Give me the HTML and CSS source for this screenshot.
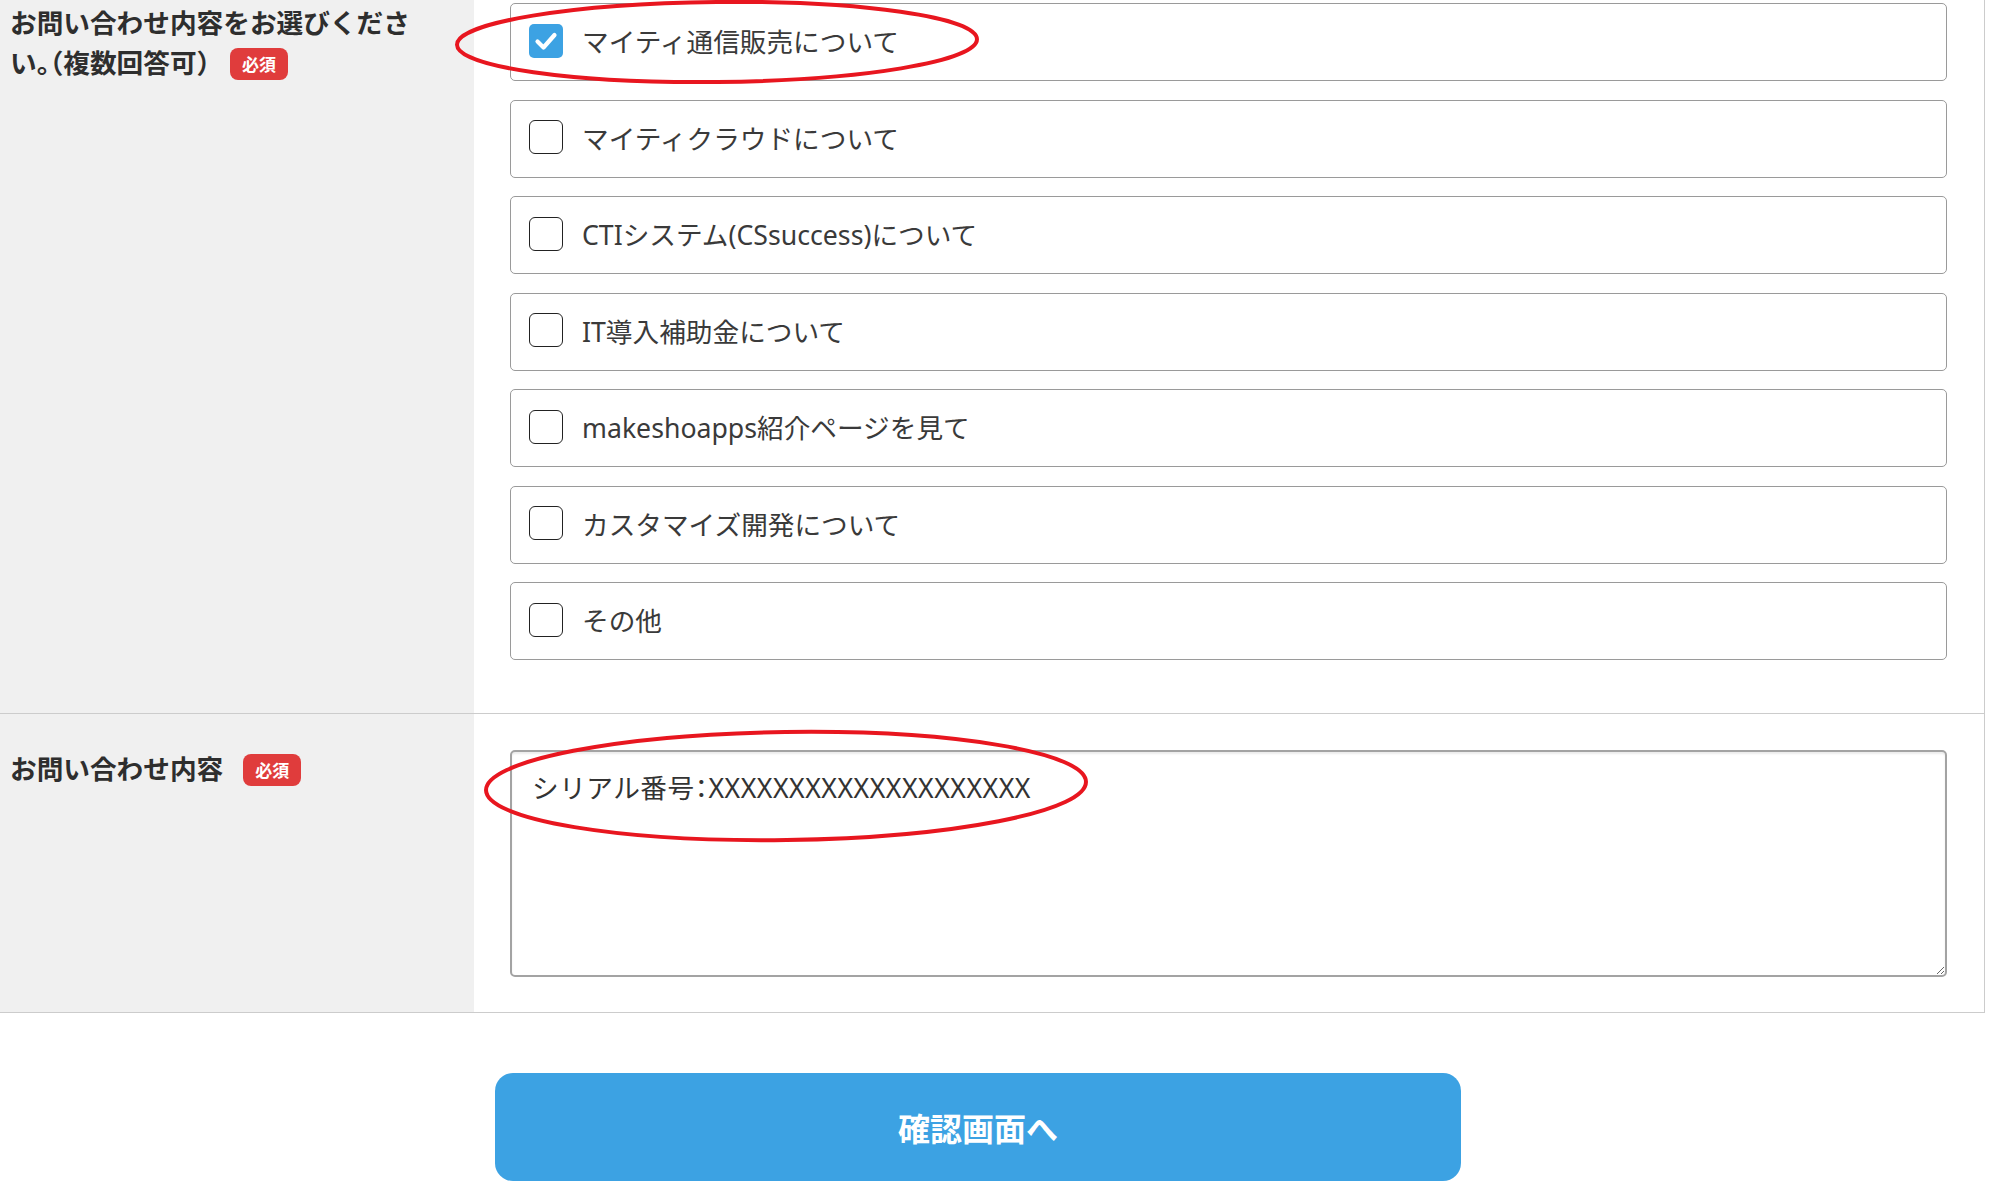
FILE: index.html
```html
<!DOCTYPE html>
<html lang="ja">
<head>
<meta charset="utf-8">
<title>お問い合わせ</title>
<link rel="stylesheet" href="styles.css">
</head>
<body>
<div class="page">
  <div class="form">
    <div class="row row-first">
      <div class="label">お問い合わせ内容をお選びください。（複数回答可）<span class="badge">必須</span></div>
      <div class="field">
        <ul class="options">
          <li class="option"><span class="cb checked"><svg viewBox="0 0 34 34" width="34" height="34"><polyline points="8.5,17.5 14.5,23.5 25.5,11" fill="none" stroke="#fff" stroke-width="4.2" stroke-linecap="round" stroke-linejoin="round"/></svg></span><span class="opt-text">マイティ通信販売について</span></li>
          <li class="option"><span class="cb"></span><span class="opt-text">マイティクラウドについて</span></li>
          <li class="option"><span class="cb"></span><span class="opt-text">CTIシステム(CSsuccess)について</span></li>
          <li class="option"><span class="cb"></span><span class="opt-text">IT導入補助金について</span></li>
          <li class="option"><span class="cb"></span><span class="opt-text">makeshoapps紹介ページを見て</span></li>
          <li class="option"><span class="cb"></span><span class="opt-text">カスタマイズ開発について</span></li>
          <li class="option"><span class="cb"></span><span class="opt-text">その他</span></li>
        </ul>
      </div>
    </div>
    <div class="row row-second">
      <div class="label">お問い合わせ内容<span class="badge">必須</span></div>
      <div class="field">
        <textarea class="textarea">シリアル番号：XXXXXXXXXXXXXXXXXXXX</textarea>
      </div>
    </div>
  </div>
  <div class="actions">
    <button class="submit" type="button">確認画面へ</button>
  </div>
  <svg class="annot" viewBox="0 0 1994 1192" width="1994" height="1192">
    <ellipse cx="717" cy="42" rx="260" ry="40" fill="none" stroke="#e8161f" stroke-width="4" transform="rotate(-0.6 717 42)"/>
    <ellipse cx="786" cy="786" rx="300" ry="54" fill="none" stroke="#e8161f" stroke-width="4" transform="rotate(-0.8 786 786)"/>
  </svg>
</div>
</body>
</html>
```
FILE: styles.css
```css
html, body {
  margin: 0;
  padding: 0;
  background: #fff;
}
body {
  font-family: "Noto Sans CJK JP", "Noto Sans", sans-serif;
  color: #333;
  overflow: hidden;
}
.page {
  position: relative;
  width: 1994px;
  height: 1192px;
  overflow: hidden;
}
.form {
  width: 1984px;
  border-right: 1px solid #cccccc;
  margin-top: -33px;
}
.row {
  display: grid;
  grid-template-columns: 474px 1fr;
  border-bottom: 1px solid #cccccc;
}
.label {
  background: #f0f0f0;
  padding: 35px 50px 0 10px;
  font-size: 26.67px;
  font-weight: 700;
  line-height: 40px;
  color: #2e2e2e;
  font-feature-settings: "halt";
}
.row-second .label {
  padding-top: 34px;
}
.badge {
  display: inline-block;
  vertical-align: middle;
  margin-left: 20px;
  margin-top: -4px;
  width: 58px;
  height: 32px;
  line-height: 32px;
  border-radius: 8px;
  background: #e03c3c;
  color: #fff;
  font-size: 17px;
  font-weight: 700;
  text-align: center;
}
.field {
  padding: 36px 37px 53px 36px;
}
.row-second .field {
  padding: 36px 37px 35px 36px;
}
.options {
  list-style: none;
  margin: 0;
  padding: 0;
  display: flex;
  flex-direction: column;
  gap: 18.5px;
}
.option {
  box-sizing: border-box;
  height: 78px;
  border: 1px solid #9a9a9a;
  border-radius: 5px;
  display: flex;
  align-items: center;
  padding-left: 18px;
  gap: 19px;
}
.cb {
  box-sizing: border-box;
  width: 34px;
  height: 34px;
  border: 1.5px solid #222;
  border-radius: 6px;
  background: #fff;
  display: flex;
  margin-top: -3px;
}
.cb.checked {
  border: none;
  background: #3ca2e3;
  border-radius: 5px;
}
.opt-text {
  font-family: "Noto Sans", "Noto Sans CJK JP", sans-serif;
  font-size: 26.67px;
  line-height: 40px;
  color: #3a3a3a;
  font-weight: 400;
}
.textarea {
  display: block;
  box-sizing: border-box;
  width: 100%;
  height: 227px;
  margin: 0;
  padding: 16px 20px;
  border: 2px solid #a3a3a3;
  border-radius: 5px;
  box-shadow: inset 0 2px 2px rgba(0, 0, 0, 0.08);
  font-family: "Noto Sans", "Noto Sans CJK JP", sans-serif;
  font-feature-settings: "halt";
  font-size: 26.67px;
  font-weight: 400;
  letter-spacing: 0.5px;
  line-height: 40px;
  color: #333;
  background: #fff;
  resize: vertical;
  outline: none;
}
.actions {
  width: 1956px;
  display: flex;
  justify-content: center;
  padding-top: 60px;
}
.submit {
  width: 966px;
  height: 108px;
  border: none;
  border-radius: 18px;
  background: #3ca2e3;
  color: #fff;
  font-family: "Noto Sans CJK JP", "Noto Sans", sans-serif;
  font-size: 32px;
  font-weight: 700;
  cursor: pointer;
}
.annot {
  position: absolute;
  top: 0;
  left: 0;
  pointer-events: none;
}
```
